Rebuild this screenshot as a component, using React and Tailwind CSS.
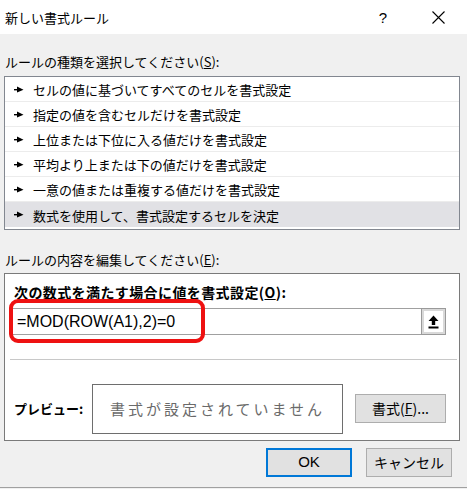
import React from "react";

const jp = { fontFamily: '"Noto Sans CJK JP", "Noto Sans", sans-serif' };
const latin = { fontFamily: '"Liberation Sans", "Noto Sans CJK JP", sans-serif' };

const rules = [
  "セルの値に基づいてすべてのセルを書式設定",
  "指定の値を含むセルだけを書式設定",
  "上位または下位に入る値だけを書式設定",
  "平均より上または下の値だけを書式設定",
  "一意の値または重複する値だけを書式設定",
  "数式を使用して、書式設定するセルを決定",
];

function RuleArrow() {
  return (
    <svg width="10" height="7" viewBox="0 0 10 7" className="shrink-0">
      <rect x="0" y="3" width="5" height="1.4" fill="#000" />
      <polygon points="3,0.5 9.5,3.7 3,6.5" fill="#000" />
    </svg>
  );
}

function UploadIcon() {
  return (
    <svg width="11" height="14" viewBox="0 0 11 14">
      <polygon points="5.5,0.5 10.5,6 7.2,6 7.2,10 3.8,10 3.8,6 0.5,6" fill="#000" />
      <rect x="0.5" y="11.5" width="10" height="2" fill="#000" />
    </svg>
  );
}

export default function App() {
  return (
    <div className="w-[467px] h-[489px] bg-[#f0f0f0] text-black flex flex-col overflow-hidden" style={jp}>
      {/* title bar */}
      <div className="h-[34px] bg-white flex items-center pl-[5px] shrink-0">
        <span className="text-[13px] leading-none">新しい書式ルール</span>
        <span className="ml-auto mr-[45px] text-[15px] leading-none" style={latin}>?</span>
        <svg width="13" height="13" viewBox="0 0 13 13" className="mr-[22px]">
          <path d="M0.5 0.5 L12.5 12.5 M12.5 0.5 L0.5 12.5" stroke="#000" strokeWidth="1.1" />
        </svg>
      </div>

      <div className="flex flex-col pl-[4px] pr-[7px]">
        <div className="mt-[18px] h-[20px] pl-[1px] text-[13px] flex items-center">
          ルールの種類を選択してください(<span className="underline">S</span>):
        </div>

        {/* rule type list */}
        <div className="mt-[4px] h-[154px] bg-white border border-[#828790] flex flex-col">
          {rules.map((r, i) => (
            <div
              key={r}
              className={
                "h-[25px] shrink-0 flex items-center gap-[9px] pl-[9px] text-[13px] " +
                (i === 5 ? "bg-[#e1e1e5]" : "border-b border-[#ececec]")
              }
            >
              <RuleArrow />
              <span className="pt-[2px]">{r}</span>
            </div>
          ))}
        </div>

        <div className="mt-[20px] h-[20px] pl-[1px] text-[13px] flex items-center">
          ルールの内容を編集してください(<span className="underline">E</span>):
        </div>

        {/* rule description box */}
        <div className="mt-[3px] h-[168px] bg-white border border-[#7a7a7a] flex flex-col pl-[7px] pr-[1px]">
          <div className="mt-[8px] h-[20px] pl-[2px] text-[14px] font-bold tracking-[0.4px] flex items-center">
            次の数式を満たす場合に値を書式設定(<span className="underline">O</span>):
          </div>

          <div className="relative mt-[6px] mr-[12px] h-[27px] border border-[#a0a0a0] flex items-stretch">
            <div className="flex-1 flex items-center pl-[4px] text-[16px]" style={latin}>
              =MOD(ROW(A1),2)=0
            </div>
            <div className="w-[25px] border-l border-[#9a9a9a] bg-[#d9d9d9] p-[2px] -my-px -mr-px border-y border-r">
              <div className="w-full h-full bg-white flex items-center justify-center">
                <UploadIcon />
              </div>
            </div>
            <div className="absolute left-[-4px] top-[-10px] w-[196px] h-[44px] border-[4px] border-[#ee1111] rounded-[9px]" />
          </div>

          <div className="mt-[24px] -ml-[2px] mr-[1px] border-t border-[#c8c8c8]" />

          <div className="mt-[24px] flex items-center">
            <div className="w-[80px] pl-[2px] text-[13px] font-bold">プレビュー:</div>
            <div className="w-[251px] h-[50px] border border-[#6e6e6e] flex items-center justify-center text-[15px] tracking-[3px] text-[#6a6a6a]">
              書式が設定されていません
            </div>
            <button className="ml-[12px] mt-[-2px] w-[91px] h-[29px] bg-[#e1e1e1] border border-[#adadad] text-[14px] flex items-center justify-center">
              書式(<span className="underline">F</span>)...
            </button>
          </div>
        </div>

        {/* buttons */}
        <div className="mt-[7px] flex justify-end gap-[14px] mr-[8px]">
          <button className="w-[86px] h-[29px] bg-[#e1e1e1] border-2 border-[#0078d7] text-[15px] flex items-center justify-center" style={latin}>
            OK
          </button>
          <button className="w-[86px] h-[29px] bg-[#e1e1e1] border border-[#adadad] text-[14px] flex items-center justify-center">
            キャンセル
          </button>
        </div>
      </div>
      <div className="mt-auto mb-[1px] border-t border-[#a0a0a0]" />
    </div>
  );
}
